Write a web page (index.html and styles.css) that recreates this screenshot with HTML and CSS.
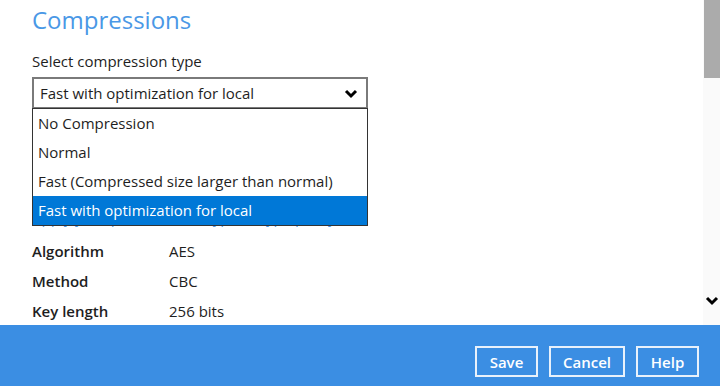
FILE: index.html
```html
<!DOCTYPE html>
<html lang="en">
<head>
    <meta charset="UTF-8">
    <title>Compressions</title>
    <link rel="stylesheet" href="styles.css">
</head>
<body>

<div class="page">
    <div class="content">
        <h1 class="title">Compressions</h1>

        <div class="field">
            <label class="field-label">Select compression type</label>
            <div class="select-wrap">
                <div class="select-box">
                    <span>Fast with optimization for local</span>
                    <svg class="chevron" width="14" height="10" viewBox="0 0 14 10">
                        <path d="M2 2 L7 7 L12 2" fill="none" stroke="#000" stroke-width="3"/>
                    </svg>
                </div>
                <!-- opened list lies over the text below -->
                <ul class="options">
                    <li>No Compression</li>
                    <li>Normal</li>
                    <li>Fast (Compressed size larger than normal)</li>
                    <li class="selected">Fast with optimization for local</li>
                </ul>
            </div>
        </div>

        <div class="encrypt-link">Apply your preferred encryption type policy</div>

        <table class="info">
            <tr><td class="key">Algorithm</td><td>AES</td></tr>
            <tr><td class="key">Method</td><td>CBC</td></tr>
            <tr><td class="key">Key length</td><td>256 bits</td></tr>
        </table>
    </div>

    <div class="scrollbar">
        <div class="thumb"></div>
        <svg class="scroll-down" width="14" height="10" viewBox="0 0 14 10">
            <path d="M2 2 L7 7 L12 2" fill="none" stroke="#000" stroke-width="3"/>
        </svg>
    </div>
</div>

<div class="footer">
    <button class="btn">Save</button>
    <button class="btn">Cancel</button>
    <button class="btn">Help</button>
</div>

</body>
</html>
```

FILE: styles.css
```css
body {
    font-family: "Open Sans", "Noto Sans", sans-serif;
    background-color: #fff;
    color: #1e1e1e;
    margin: 0;
    padding: 0;
}
.page {
    position: relative;
    height: 325px;
    overflow: hidden;
}
.content {
    padding-left: 32px;
    width: 650px;
}
.title {
    margin: 0;
    padding-top: 4px;
    font-size: 24px;
    line-height: 32px;
    font-weight: normal;
    color: #4a98e6;
}
.field {
    margin-top: 15px;
}
.field-label {
    display: block;
    font-size: 15px;
    line-height: 20px;
    margin-bottom: 6px;
}
.select-wrap {
    position: relative;
    width: 336px;
}
.select-box {
    display: flex;
    align-items: center;
    justify-content: space-between;
    height: 28px;
    padding: 0 8px 0 6px;
    border: 2px solid #7a7a7a;
    font-size: 15px;
}
.chevron {
    margin-top: 2px;
}
.options {
    position: absolute;
    top: 31px;
    left: 0;
    right: 0;
    margin: 0;
    padding: 0;
    list-style-type: none;
    background-color: #fff;
    border: 1px solid #333;
    z-index: 2;
}
.options li {
    height: 29px;
    line-height: 29px;
    padding-left: 5px;
    font-size: 15px;
}
.options li.selected {
    background-color: #0078d7;
    color: #fff;
}
.encrypt-link {
    margin-top: 98px;
    width: 310px;
    white-space: nowrap;
    overflow: hidden;
    font-size: 15px;
    line-height: 20px;
    color: #4a98e6;
}
.info {
    border-collapse: collapse;
    margin-top: 9px;
    font-size: 15px;
}
.info td {
    padding: 0;
    height: 30px;
}
.info td.key {
    width: 137px;
    font-weight: 600;
}
.scrollbar {
    position: absolute;
    top: 0;
    right: 0;
    width: 17px;
    height: 325px;
    background-color: #fafafa;
}
.thumb {
    margin-left: 1px;
    height: 78px;
    background-color: #ababab;
}
.scroll-down {
    position: absolute;
    left: 2px;
    top: 296px;
}
.footer {
    display: flex;
    justify-content: flex-end;
    align-items: flex-start;
    gap: 11px;
    height: 40px;
    padding: 21px 21px 0 0;
    background-color: #3b8ee3;
}
.btn {
    height: 31px;
    min-width: 63px;
    padding: 0 12px;
    background-color: #3b8ee3;
    color: #fff;
    border: 2px solid #e8f1fb;
    font-family: "Open Sans", "Noto Sans", sans-serif;
    font-size: 15px;
    font-weight: 600;
    cursor: pointer;
}
```
